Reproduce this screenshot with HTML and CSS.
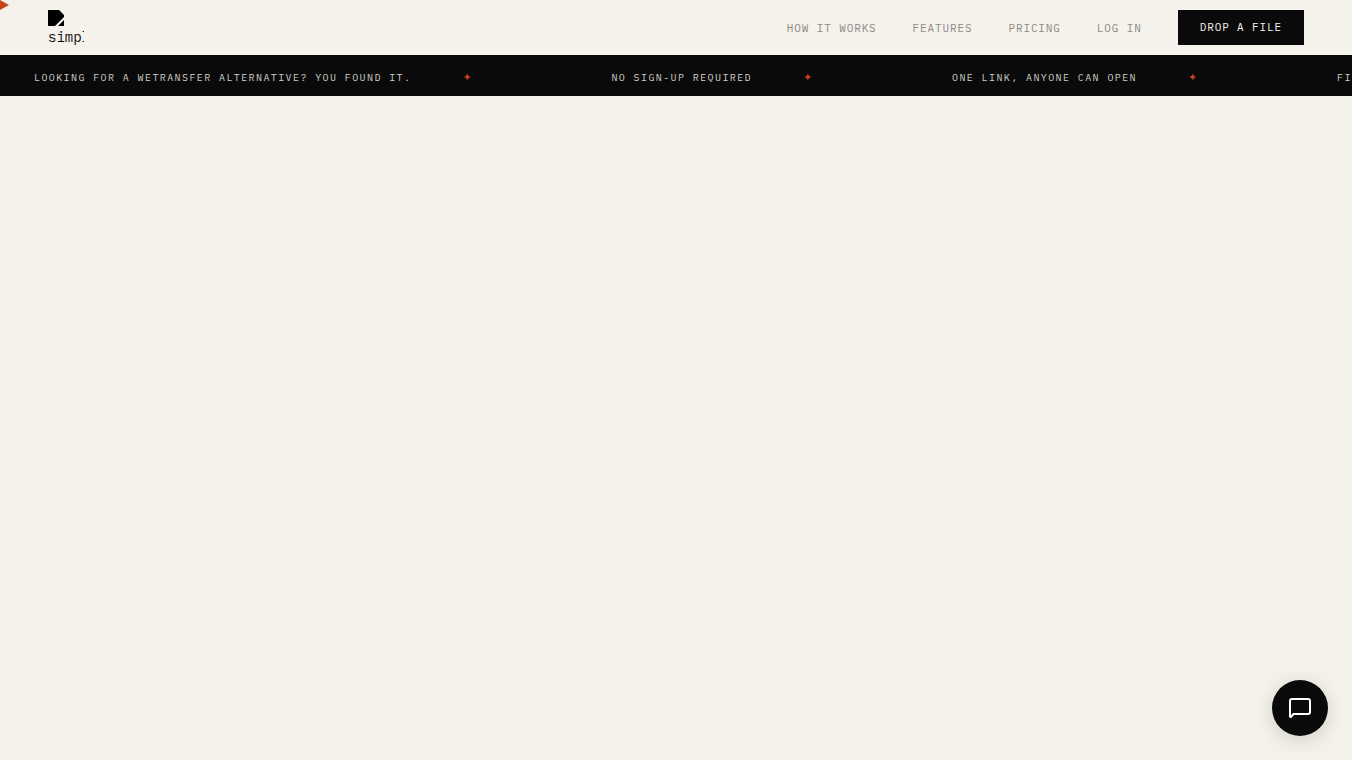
FILE: index.html
```html
<!DOCTYPE html>
<html lang="en">
<head>
    <meta charset="utf-8">
    <meta name="viewport" content="width=device-width, initial-scale=1">
    <title>simpl</title>
    <link rel="stylesheet" href="styles.css">
</head>
<body>
    <svg class="cursor" width="9" height="10" viewBox="0 0 9 10" aria-hidden="true">
        <path d="M0 0L9 5L0 10Z"/>
    </svg>

    <header class="header">
        <a class="logo" href="#">
            <svg class="logo-mark" width="16" height="16" viewBox="0 0 16 16" aria-hidden="true">
                <path d="M0 0H11L16 5V7L7 16H0Z"/>
                <path d="M16 10V16H10Z"/>
            </svg>
            <span class="logo-text">simpl</span>
        </a>
        <nav class="nav">
            <a href="#how">How it works</a>
            <a href="#features">Features</a>
            <a href="#pricing">Pricing</a>
            <a href="#login">Log in</a>
            <button class="nav-btn" type="button">Drop a file</button>
        </nav>
    </header>

    <div class="ticker">
        <div class="ticker-item">Looking for a WeTransfer alternative? You found it.<span class="star">✦</span></div>
        <div class="ticker-item">No sign-up required<span class="star">✦</span></div>
        <div class="ticker-item">One link, anyone can open<span class="star">✦</span></div>
        <div class="ticker-item">Fi</div>
    </div>

    <main></main>

    <button class="chat-btn" type="button" aria-label="Open chat">
        <svg width="24" height="24" viewBox="0 0 24 24" aria-hidden="true">
            <path d="M20 3H4a2 2 0 0 0-2 2v15.500a.6.6 0 0 0 1 .4L5.500 18H20a2 2 0 0 0 2-2V5a2 2 0 0 0-2-2z"/>
        </svg>
    </button>
</body>
</html>
```

FILE: styles.css
```css
* {
    box-sizing: border-box;
}

body {
    margin: 0;
    min-height: 100vh;
    background: #f5f2eb;
    color: #0a0a0a;
    font-family: "IBM Plex Mono", "Liberation Mono", monospace;
    overflow-x: hidden;
}

.cursor {
    position: fixed;
    top: 0;
    left: 0;
    fill: #c8431a;
    pointer-events: none;
    z-index: 10;
}

/* header */
.header {
    display: flex;
    align-items: center;
    justify-content: space-between;
    padding: 10px 48px;
}

.logo {
    display: block;
    width: 36px;
    height: 35px;
    overflow: hidden;
    color: #0a0a0a;
    font-size: 14px;
    line-height: 22px;
    text-decoration: none;
}

.logo-mark {
    display: block;
    fill: #000;
}

.logo-text {
    display: block;
}

.nav {
    display: flex;
    align-items: center;
    gap: 36px;
}

.nav a,
.nav-btn {
    font-size: 11px;
    line-height: 15px;
    letter-spacing: 0.08em;
    text-transform: uppercase;
}

.nav a {
    padding-top: 2px;
    color: #8c8a86;
    text-decoration: none;
}

.nav-btn {
    padding: 10px 22px;
    border: none;
    background: #0a0a0a;
    color: #f5f2eb;
    font-family: inherit;
    cursor: pointer;
}

/* ticker */
.ticker {
    display: flex;
    padding: 15px 0 10px 34px;
    overflow: hidden;
    background: #0a0a0a;
    color: #d0cec8;
    font-size: 10px;
    line-height: 16px;
    letter-spacing: 0.14em;
    text-transform: uppercase;
    white-space: nowrap;
}

.ticker-item {
    display: flex;
    flex-shrink: 0;
    gap: 51px;
    padding-right: 140px;
}

.star {
    width: 9px;
    color: #c8431a;
    font-family: "DejaVu Sans", sans-serif;
    font-size: 11px;
    letter-spacing: 0;
}

/* chat */
.chat-btn {
    position: fixed;
    right: 24px;
    bottom: 24px;
    display: flex;
    align-items: center;
    justify-content: center;
    width: 56px;
    height: 56px;
    padding: 0;
    border: none;
    border-radius: 50%;
    background: #0a0a0a;
    box-shadow: 0 4px 20px rgba(0, 0, 0, 0.15);
    cursor: pointer;
}

.chat-btn svg {
    fill: none;
    stroke: #fff;
    stroke-width: 2;
    stroke-linecap: round;
    stroke-linejoin: round;
}
```
